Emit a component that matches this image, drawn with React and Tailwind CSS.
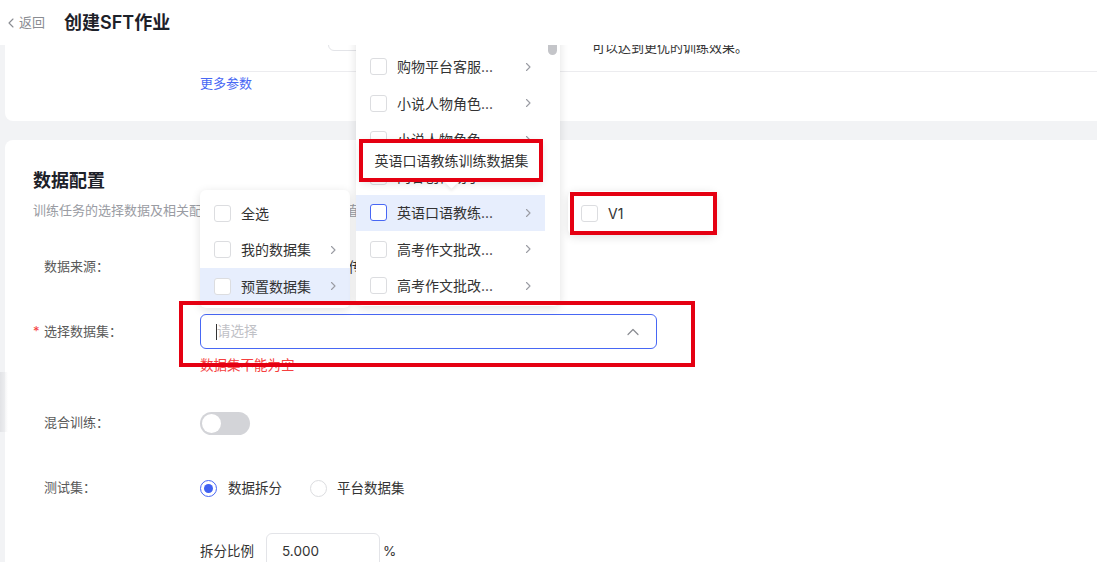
import React from 'react'

const Chevron = ({ className = '' }) => (
  <svg width="7" height="10" viewBox="0 0 7 10" className={className} fill="none">
    <path d="M1.5 1.5 5 5 1.5 8.5" stroke="#9a9ca3" strokeWidth="1.1" strokeLinecap="round" strokeLinejoin="round" />
  </svg>
)

function Check({ active }) {
  return (
    <div className={`w-[17px] h-[17px] shrink-0 rounded-[3px] bg-white border ${active ? 'border-[#4867f4]' : 'border-[#dcdde0]'}`} />
  )
}

function Item({ label, arrow, active, hover, w = 'w-[150px]' }) {
  return (
    <div className={`flex items-center h-[36.5px] pl-[14px] pr-[13px] ${w} ${active ? 'bg-[#e7eefd]' : ''}`}>
      <Check active={hover} />
      <span className="ml-[10px] text-[14px] text-[#333] whitespace-nowrap flex-1">{label}</span>
      {arrow && <Chevron />}
    </div>
  )
}

function Row({ label, required, children, className = '' }) {
  return (
    <div className={`flex items-center ${className}`}>
      <div className="w-[167px] shrink-0 flex items-center text-[13px] text-[#595959]">
        <span className="w-[11px] text-[#f53f3f]">{required ? '*' : ''}</span>
        <span>{label}：</span>
      </div>
      {children}
    </div>
  )
}

export default function App() {
  const presets = [
    '行业知识问答...',
    '购物平台客服...',
    '小说人物角色...',
    '小说人物角色...',
    '内容创作助手...',
    '英语口语教练...',
    '高考作文批改...',
    '高考作文批改...',
  ]

  return (
    <div className="relative w-[1097px] h-[562px] overflow-hidden bg-[#f2f3f5] font-['Inter','Noto_Sans_CJK_SC',sans-serif]">

      {/* Header */}
      <div className="relative z-30 h-[45px] bg-white flex items-center">
        <svg width="6" height="10" viewBox="0 0 6 10" className="ml-[8px]" fill="none">
          <path d="M5 1 1 5l4 4" stroke="#8a8c92" strokeWidth="1.1" strokeLinecap="round" strokeLinejoin="round" />
        </svg>
        <span className="ml-[5px] text-[13px] text-[#8a8c92]">返回</span>
        <span className="ml-[19px] text-[18px] font-semibold text-[#1d2129]">创建SFT作业</span>
      </div>

      {/* Card: training params (scrolled) */}
      <div className="-mt-[35px] ml-[5px] w-[1100px] h-[111px] bg-white rounded-b-lg pt-[9px]">
        <div className="flex items-start pl-[323px] h-[32px]">
          <div className="w-[230px] h-[32px] rounded-md border border-[#e3e4e8]" />
          <span className="ml-[34px] mt-[18px] text-[13px] leading-[20px] text-[#333]">可以达到更优的训练效果。</span>
        </div>
        <div className="ml-[195px] mt-[20px] border-t border-[#ececef]" />
        <div className="ml-[195px] mt-[1px] text-[13px] leading-[20px] text-[#4867f4]">更多参数</div>
      </div>

      {/* Card: data config */}
      <div className="mt-[19px] ml-[5px] w-[1100px] h-[500px] bg-white rounded-lg pl-[28px] pt-[29px]">
        <div className="text-[18px] leading-[24px] font-semibold text-[#1d2129]">数据配置</div>
        <div className="mt-[7px] text-[13px] leading-[20px] text-[#9a9ca3]">训练任务的选择数据及相关配置，数据集需符合格式与值域要求。</div>

        <Row label="数据来源" className="mt-[31px] h-[32px]">
          <div className="flex items-center gap-[10px]">
            <div className="w-[17px] h-[17px] rounded-full border border-[#4867f4]" />
            <span className="text-[13.5px] text-[#333]">平台数据集与用户上传内容</span>
          </div>
        </Row>

        <Row label="选择数据集" required className="mt-[31px] h-[35px]">
          <div className="w-[457px] h-[35px] rounded-md border border-[#4867f4] flex items-center pl-[15px] pr-[17px]">
            <div className="w-px h-[16px] bg-[#333]" />
            <span className="text-[13.5px] text-[#bfc1c6]">请选择</span>
            <svg width="12" height="8" viewBox="0 0 12 8" className="ml-auto" fill="none">
              <path d="M1 6.5 6 1.5l5 5" stroke="#8a8c92" strokeWidth="1.2" strokeLinecap="round" strokeLinejoin="round" />
            </svg>
          </div>
        </Row>
        <div className="ml-[167px] mt-[6px] text-[13.5px] leading-[20px] text-[#f53f3f]">数据集不能为空</div>

        <Row label="混合训练" className="mt-[32px] h-[32px]">
          <div className="w-[50px] h-[23px] rounded-full bg-[#d3d4d8] flex items-center px-[2px]">
            <div className="w-[19px] h-[19px] rounded-full bg-white" />
          </div>
        </Row>

        <Row label="测试集" className="mt-[33px] h-[32px]">
          <div className="flex items-center">
            <div className="w-[17px] h-[17px] rounded-full border border-[#4867f4] flex items-center justify-center">
              <div className="w-[9px] h-[9px] rounded-full bg-[#4061f2]" />
            </div>
            <span className="ml-[11px] text-[13.5px] text-[#333]">数据拆分</span>
            <div className="ml-[28px] w-[17px] h-[17px] rounded-full border border-[#dcdde0]" />
            <span className="ml-[10px] text-[13.5px] text-[#333]">平台数据集</span>
          </div>
        </Row>

        <div className="mt-[29px] ml-[167px] flex items-center h-[36px]">
          <span className="text-[13.5px] text-[#333]">拆分比例</span>
          <div className="ml-[12px] w-[114px] h-[36px] rounded-md border border-[#e3e4e8] flex items-center pl-[15px] text-[13.5px] text-[#333]">5.000</div>
          <span className="ml-[3px] text-[13.5px] text-[#333]">%</span>
        </div>
      </div>

      {/* left edge shadow of a floating element */}
      <div className="absolute left-0 top-[372px] w-[8px] h-[60px] bg-gradient-to-r from-[#e2e3e6] to-transparent" />

      {/* Cascader panel 1 */}
      <div className="absolute z-10 left-[200px] top-[190px] w-[150px] bg-white rounded-md shadow-[0_2px_10px_rgba(0,0,0,0.12)] pt-[5px] pb-[3px]">
        <Item label="全选" />
        <Item label="我的数据集" arrow />
        <Item label="预置数据集" arrow active />
      </div>

      {/* Cascader panel 2 */}
      <div className="absolute z-10 left-[356px] top-[8px] w-[204px] bg-white rounded-md shadow-[0_2px_10px_rgba(0,0,0,0.12)] pt-[4px] pb-[2px] flex">
        <div>
          {presets.map((p, i) => (
            <Item key={i} label={p} arrow w="w-[189px]" active={i === 5} hover={i === 5} />
          ))}
        </div>
        <div className="relative w-[15px]">
          <div className="absolute left-[3px] top-[10px] w-[9px] h-[33px] rounded-full bg-[#c4c5c9]" />
        </div>
      </div>

      {/* Tooltip */}
      <div className="absolute z-20 left-[361px] top-[140px] w-[181px] h-[41px] bg-white rounded shadow-[0_2px_8px_rgba(0,0,0,0.12)] flex items-center justify-center text-[14px] text-[#333] whitespace-nowrap">
        英语口语教练训练数据集
      </div>
      <div className="absolute z-20 left-[447px] top-[178px] w-[9px] h-[9px] bg-white rotate-45 shadow-[2px_2px_3px_rgba(0,0,0,0.06)]" />

      {/* Cascader panel 3 */}
      <div className="absolute z-10 left-[568px] top-[191px] w-[148px] bg-white rounded-md shadow-[0_2px_10px_rgba(0,0,0,0.12)] pt-[4px] pb-[3px]">
        <div className="flex items-center h-[36.5px] pl-[13px]">
          <Check />
          <span className="ml-[10px] text-[14px] text-[#333]">V1</span>
        </div>
      </div>

      {/* Red annotation boxes */}
      <div className="absolute z-40 left-[359px] top-[139px] w-[184px] h-[43px] border-4 border-[#e50012]" />
      <div className="absolute z-40 left-[179px] top-[301px] w-[516px] h-[66px] border-4 border-[#e50012]" />
      <div className="absolute z-40 left-[570px] top-[192px] w-[147px] h-[43px] border-4 border-[#e50012]" />
    </div>
  )
}
